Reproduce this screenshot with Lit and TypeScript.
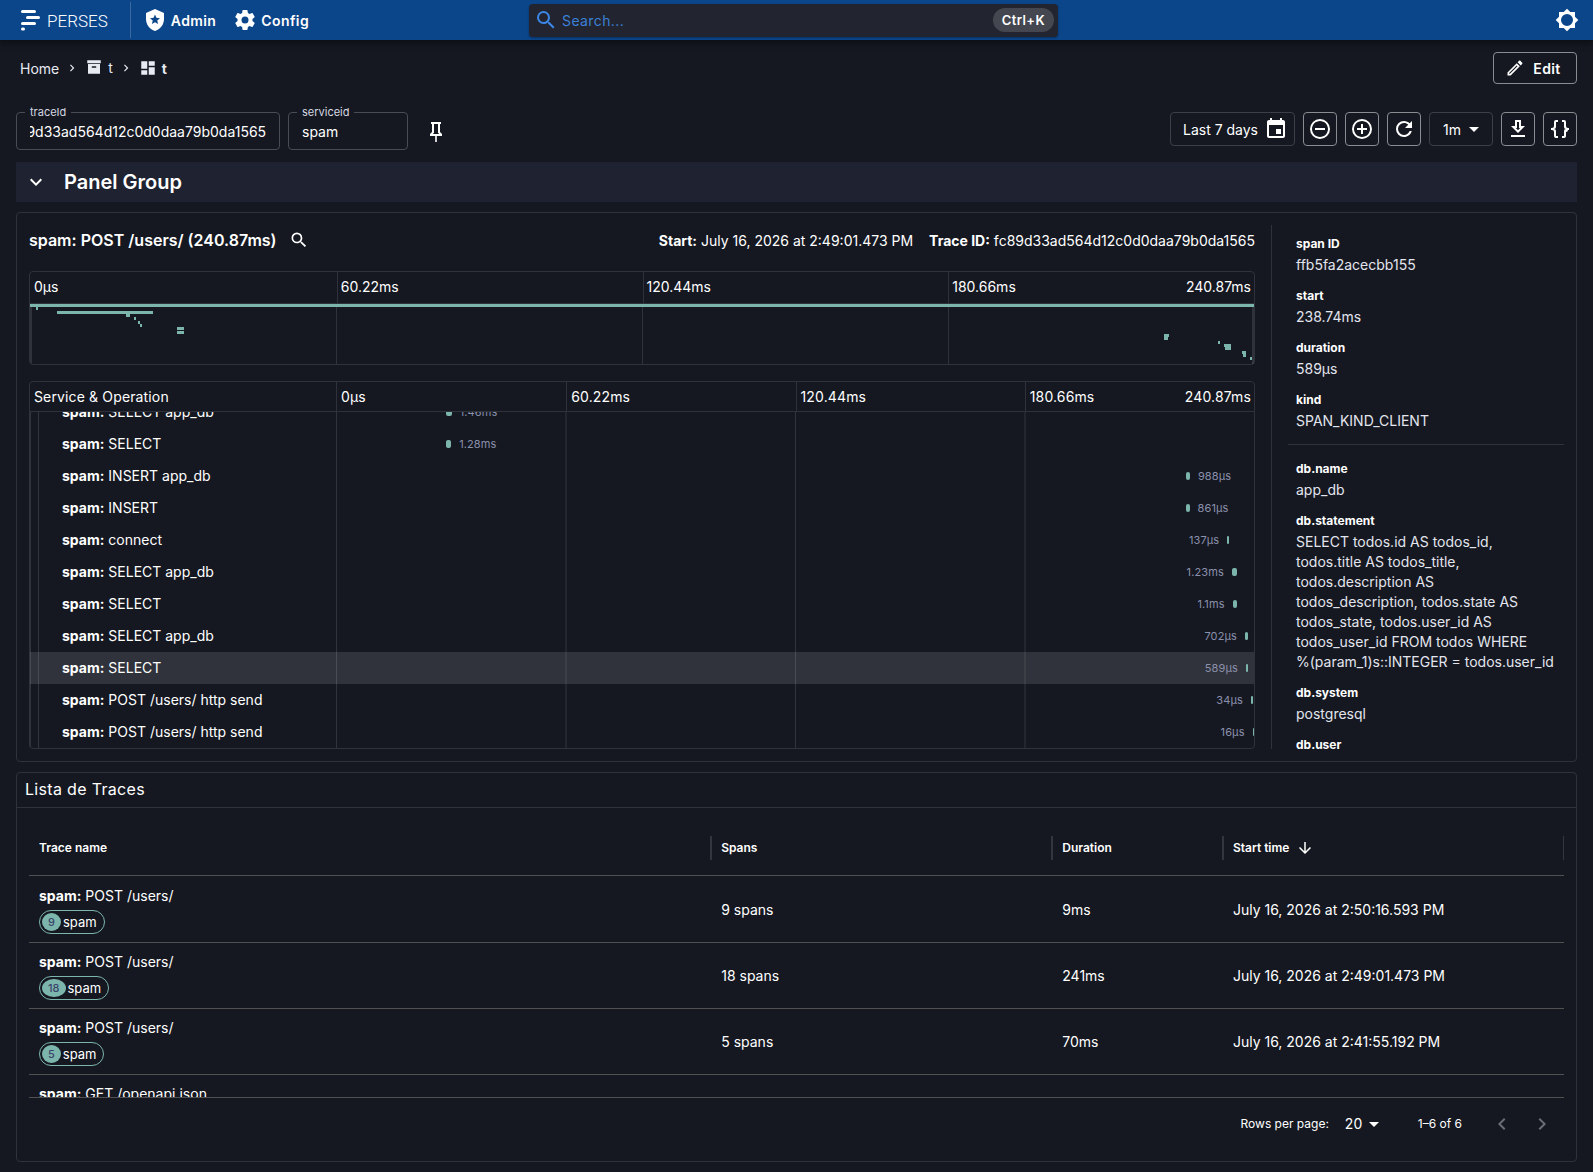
import { LitElement, html, css, svg } from "lit";
import { customElement, query } from "lit/decorators.js";
import { classMap } from "lit/directives/class-map.js";

const ICONS = {
  shieldStar:
    "M12,1L3,5V11C3,16.55 6.84,21.74 12,23C17.16,21.74 21,16.55 21,11V5L12,1M15.08,16L12,14.15L8.93,16L9.74,12.5L7.03,10.16L10.6,9.85L12,6.55L13.4,9.84L16.97,10.15L14.26,12.5L15.08,16Z",
  cog: "M12,15.5A3.5,3.5 0 0,1 8.5,12A3.5,3.5 0 0,1 12,8.5A3.5,3.5 0 0,1 15.5,12A3.5,3.5 0 0,1 12,15.5M19.43,12.97C19.47,12.65 19.5,12.33 19.5,12C19.5,11.67 19.47,11.34 19.43,11L21.54,9.37C21.73,9.22 21.78,8.95 21.66,8.73L19.66,5.27C19.54,5.05 19.27,4.96 19.05,5.05L16.56,6.05C16.04,5.66 15.5,5.32 14.87,5.07L14.5,2.42C14.46,2.18 14.25,2 14,2H10C9.75,2 9.54,2.18 9.5,2.42L9.13,5.07C8.5,5.32 7.96,5.66 7.44,6.05L4.95,5.05C4.73,4.96 4.46,5.05 4.34,5.27L2.34,8.73C2.21,8.95 2.27,9.22 2.46,9.37L4.57,11C4.53,11.34 4.5,11.67 4.5,12C4.5,12.33 4.53,12.65 4.57,12.97L2.46,14.63C2.27,14.78 2.21,15.05 2.34,15.27L4.34,18.73C4.46,18.95 4.73,19.03 4.95,18.95L7.44,17.94C7.96,18.34 8.5,18.68 9.13,18.93L9.5,21.58C9.54,21.82 9.75,22 10,22H14C14.25,22 14.46,21.82 14.5,21.58L14.87,18.93C15.5,18.67 16.04,18.34 16.56,17.94L19.05,18.95C19.27,19.03 19.54,18.95 19.66,18.73L21.66,15.27C21.78,15.05 21.73,14.78 21.54,14.63L19.43,12.97Z",
  magnify:
    "M9.5,3A6.5,6.5 0 0,1 16,9.5C16,11.11 15.41,12.59 14.44,13.73L14.71,14H15.5L20.5,19L19,20.5L14,15.5V14.71L13.73,14.44C12.59,15.41 11.11,16 9.5,16A6.5,6.5 0 0,1 3,9.5A6.5,6.5 0 0,1 9.5,3M9.5,5C7,5 5,7 5,9.5C5,12 7,14 9.5,14C12,14 14,12 14,9.5C14,7 12,5 9.5,5Z",
  brightness:
    "M12,18A6,6 0 0,1 6,12A6,6 0 0,1 12,6A6,6 0 0,1 18,12A6,6 0 0,1 12,18M20,15.31L23.31,12L20,8.69V4H15.31L12,0.69L8.69,4H4V8.69L0.69,12L4,15.31V20H8.69L12,23.31L15.31,20H20V15.31Z",
  chevronRight: "M8.59,16.58L13.17,12L8.59,7.41L10,6L16,12L10,18L8.59,16.58Z",
  chevronLeft: "M15.41,16.58L10.83,12L15.41,7.41L14,6L8,12L14,18L15.41,16.58Z",
  chevronDown: "M7.41,8.58L12,13.17L16.59,8.58L18,10L12,16L6,10L7.41,8.58Z",
  archive:
    "M3,3H21V7H3V3M4,8H20V21H4V8M9.5,11A0.5,0.5 0 0,0 9,11.5V13H15V11.5A0.5,0.5 0 0,0 14.5,11H9.5Z",
  dashboard: "M13,3V9H21V3M13,21H21V11H13M3,21H11V15H3M3,13H11V3H3V13Z",
  pencil:
    "M14.06,9L15,9.94L5.92,19H5V18.08L14.06,9M17.66,3C17.41,3 17.15,3.1 16.96,3.29L15.13,5.12L18.88,8.87L20.71,7.04C21.1,6.65 21.1,6 20.71,5.63L18.37,3.29C18.17,3.09 17.92,3 17.66,3M14.06,6.19L3,17.25V21H6.75L17.81,9.94L14.06,6.19Z",
  pin: "M16,12V4H17V2H7V4H8V12L6,14V16H11.2V22H12.8V16H18V14L16,12M8.8,14L10,12.8V4H14V12.8L15.2,14H8.8Z",
  calendar:
    "M17 12h-5v5h5v-5zM16 1v2H8V1H6v2H5c-1.11 0-1.99.9-1.99 2L3 19c0 1.1.89 2 2 2h14c1.1 0 2-.9 2-2V5c0-1.1-.9-2-2-2h-1V1h-2zm3 18H5V8h14v11z",
  zoomOut:
    "M12,20C7.59,20 4,16.41 4,12C4,7.59 7.59,4 12,4C16.41,4 20,7.59 20,12C20,16.41 16.41,20 12,20M12,2A10,10 0 0,0 2,12A10,10 0 0,0 12,22A10,10 0 0,0 22,12A10,10 0 0,0 12,2M7,13H17V11H7",
  zoomIn:
    "M12,20C7.59,20 4,16.41 4,12C4,7.59 7.59,4 12,4C16.41,4 20,7.59 20,12C20,16.41 16.41,20 12,20M12,2A10,10 0 0,0 2,12A10,10 0 0,0 12,22A10,10 0 0,0 22,12A10,10 0 0,0 12,2M13,7H11V11H7V13H11V17H13V13H17V11H13V7Z",
  refresh:
    "M17.65,6.35C16.2,4.9 14.21,4 12,4A8,8 0 0,0 4,12A8,8 0 0,0 12,20C15.73,20 18.84,17.45 19.73,14H17.65C16.83,16.33 14.61,18 12,18A6,6 0 0,1 6,12A6,6 0 0,1 12,6C13.66,6 15.14,6.69 16.22,7.78L13,11H20V4L17.65,6.35Z",
  download:
    "M13,5V11H14.17L12,13.17L9.83,11H11V5H13M15,3H9V9H5L12,16L19,9H15V3M19,18H5V20H19V18Z",
  braces:
    "M8,3A2,2 0 0,0 6,5V9A2,2 0 0,1 4,11H3V13H4A2,2 0 0,1 6,15V19A2,2 0 0,0 8,21H10V19H8V14A2,2 0 0,0 6,12A2,2 0 0,0 8,10V5H10V3M16,3A2,2 0 0,1 18,5V9A2,2 0 0,0 20,11H21V13H20A2,2 0 0,1 18,15V19A2,2 0 0,1 16,21H14V19H16V14A2,2 0 0,1 18,12A2,2 0 0,1 16,10V5H14V3H16Z",
  caret: "M7 10l5 5 5-5z",
  arrowDown: "M20 12l-1.41-1.41L13 16.17V4h-2v12.17l-5.58-5.59L4 12l8 8 8-8z",
};

const icon = (name: keyof typeof ICONS, size = "i24") =>
  html`<svg class=${size} viewBox="0 0 24 24" fill="currentColor" aria-hidden="true"><path d=${ICONS[name]} /></svg>`;

/** Total duration of the trace, in milliseconds. */
const TOTAL = 240.87;
const pct = (ms: number) => `${((ms / TOTAL) * 100).toFixed(3)}%`;

interface Span {
  name: string;
  start: number;
  ms: number;
  label: string;
  selected?: boolean;
}

const SPANS: Span[] = [
  { name: "SELECT app_db", start: 28.9, ms: 1.46, label: "1.46ms" },
  { name: "SELECT", start: 28.95, ms: 1.28, label: "1.28ms" },
  { name: "INSERT app_db", start: 223.08, ms: 0.988, label: "988μs" },
  { name: "INSERT", start: 223.1, ms: 0.861, label: "861μs" },
  { name: "connect", start: 233.85, ms: 0.137, label: "137μs" },
  { name: "SELECT app_db", start: 235.05, ms: 1.23, label: "1.23ms" },
  { name: "SELECT", start: 235.25, ms: 1.1, label: "1.1ms" },
  { name: "SELECT app_db", start: 238.5, ms: 0.702, label: "702μs" },
  { name: "SELECT", start: 238.74, ms: 0.589, label: "589μs", selected: true },
  { name: "POST /users/ http send", start: 240.05, ms: 0.034, label: "34μs" },
  { name: "POST /users/ http send", start: 240.5, ms: 0.016, label: "16μs" },
];

/** Spans above the visible part of the list; only the minimap draws them. */
const EARLIER: [number, number][] = [
  [0, TOTAL],
  [1.1, 0.2],
  [5.3, 19],
  [18.8, 0.95],
  [20.5, 0.3],
  [21.2, 0.2],
  [21.6, 0.2],
];
const MINIMAP: [number, number][] = [
  ...EARLIER,
  ...SPANS.map((s): [number, number] => [s.start, s.ms]),
];

const TICKS = ["0μs", "60.22ms", "120.44ms", "180.66ms"];

const ATTRS = [
  ["span ID", "ffb5fa2acecbb155"],
  ["start", "238.74ms"],
  ["duration", "589μs"],
  ["kind", "SPAN_KIND_CLIENT"],
];
const DB_ATTRS = [
  ["db.name", "app_db"],
  [
    "db.statement",
    "SELECT todos.id AS todos_id, todos.title AS todos_title, todos.description AS todos_description, todos.state AS todos_state, todos.user_id AS todos_user_id FROM todos WHERE\n%(param_1)s::INTEGER = todos.user_id",
  ],
  ["db.system", "postgresql"],
  ["db.user", "postgres"],
];

const TRACES = [
  { name: "POST /users/", spans: 9, duration: "9ms", start: "July 16, 2026 at 2:50:16.593 PM" },
  { name: "POST /users/", spans: 18, duration: "241ms", start: "July 16, 2026 at 2:49:01.473 PM" },
  { name: "POST /users/", spans: 5, duration: "70ms", start: "July 16, 2026 at 2:41:55.192 PM" },
  { name: "GET /openapi.json", spans: 3, duration: "12ms", start: "July 16, 2026 at 2:41:50.310 PM" },
];

const shared = css`
  :host {
    display: block;
  }
  * {
    box-sizing: border-box;
  }
  svg {
    display: block;
    flex: none;
  }
  .i14 { width: 14px; height: 14px; }
  .i18 { width: 18px; height: 18px; }
  .i20 { width: 20px; height: 20px; }
  .i24 { width: 24px; height: 24px; }
  button, input, select {
    font: inherit;
    letter-spacing: inherit;
    color: inherit;
    margin: 0;
    padding: 0;
    border: 0;
    background: none;
    outline: none;
  }
  button {
    display: inline-flex;
    align-items: center;
    justify-content: center;
  }
  a {
    color: inherit;
    text-decoration: none;
  }
  h1, h2, h3, p, dl, dd {
    margin: 0;
  }
`;

@customElement("app-header")
export class AppHeader extends LitElement {
  static styles = [
    shared,
    css`
      .bar {
        display: grid;
        grid-template-columns: 1fr minmax(0, 529px) 1fr;
        align-items: center;
        height: 40px;
        padding: 0 14px 0 8px;
        background: #0b458a;
        color: #fff;
        box-shadow: 0 2px 4px rgba(0, 0, 0, 0.25), 0 4px 8px rgba(0, 0, 0, 0.2);
      }
      .left {
        display: flex;
        align-items: center;
      }
      .brand {
        display: flex;
        align-items: center;
        gap: 6px;
        height: 36px;
        padding: 0 22px 0 12px;
        border-right: 1px solid rgba(255, 255, 255, 0.2);
        font: 300 17px/22px Roboto, "Liberation Sans", sans-serif;
      }
      .brand span {
        padding-top: 2px;
      }
      .nav {
        display: flex;
        gap: 17px;
        padding-left: 12px;
      }
      .nav a {
        display: flex;
        align-items: center;
        gap: 4px;
        font-weight: 600;
        letter-spacing: 0.4px;
      }
      .search {
        display: flex;
        align-items: center;
        height: 33px;
        padding: 0 4px 0 5px;
        gap: 4px;
        border-radius: 4px;
        background: #22252f;
        color: #3b86e6;
        letter-spacing: 0.4px;
        box-shadow: 0 1px 2px rgba(0, 0, 0, 0.3);
      }
      .search input {
        flex: 1;
        min-width: 0;
        padding-top: 1px;
      }
      .search input::placeholder {
        color: #3b80d8;
        opacity: 1;
      }
      .key {
        height: 24px;
        padding: 0 9px;
        border-radius: 12px;
        background: #44474f;
        color: #fff;
        font-size: 13px;
        line-height: 24px;
        font-weight: 600;
      }
      .theme {
        justify-self: end;
      }
    `,
  ];

  render() {
    return html`
      <header class="bar">
        <div class="left">
          <a class="brand" href="#">
            <svg width="21" height="22" viewBox="0 0 21 22" fill="none" stroke="#fff" stroke-width="3" stroke-linecap="round" aria-hidden="true">
              <path d="M2.5 2.5H14.5M7.5 8.5H18.5M2.5 14.5H14.5M2.5 20H3.5" />
            </svg>
            <span>PERSES</span>
          </a>
          <nav class="nav">
            <a href="#admin">${icon("shieldStar")}Admin</a>
            <a href="#config">${icon("cog")}Config</a>
          </nav>
        </div>
        <div class="search">
          ${icon("magnify")}
          <input type="text" placeholder="Search..." aria-label="Search" />
          <span class="key">Ctrl+K</span>
        </div>
        <button class="theme" aria-label="Toggle theme">${icon("brightness")}</button>
      </header>
    `;
  }
}

@customElement("dashboard-toolbar")
export class DashboardToolbar extends LitElement {
  static styles = [
    shared,
    css`
      .row {
        display: flex;
        align-items: center;
        justify-content: space-between;
      }
      .top {
        height: 56px;
        padding-left: 4px;
      }
      .crumbs {
        display: flex;
        align-items: center;
        gap: 6px;
        color: #e8eaf2;
      }
      .crumbs a, .crumbs strong {
        display: flex;
        align-items: center;
        gap: 5px;
      }
      .crumbs .project {
        padding-bottom: 2px;
      }
      .edit {
        gap: 8px;
        width: 84px;
        height: 32px;
        padding-right: 4px;
        border: 1px solid #8a8c92;
        border-radius: 4px;
        font-weight: 600;
        letter-spacing: 0.4px;
      }
      .vars {
        height: 66px;
        align-items: flex-start;
        padding-top: 16px;
      }
      .group {
        display: flex;
        gap: 8px;
      }
      .field {
        position: relative;
        width: 120px;
        height: 38px;
        padding: 0 13px;
        border: 1px solid #484b53;
        border-radius: 4px;
      }
      .wide {
        width: 264px;
      }
      .field label {
        position: absolute;
        top: -10px;
        left: 8px;
        padding: 0 5px;
        background: #151821;
        font-size: 11px;
        line-height: 18px;
        color: #d5d8e2;
      }
      .field input {
        width: 100%;
        height: 36px;
      }
      .pin {
        padding: 8px;
      }
      .box {
        height: 34px;
        min-width: 34px;
        border: 1px solid #8a8c92;
        border-radius: 4px;
      }
      .range {
        gap: 6px;
        padding: 0 6px 0 12px;
        border-color: #3c3f48;
      }
      .interval {
        position: relative;
        display: flex;
        align-items: center;
        width: 64px;
        border-color: #3c3f48;
      }
      .interval select {
        width: 100%;
        height: 32px;
        padding-left: 13px;
        appearance: none;
      }
      .interval svg {
        position: absolute;
        right: 6px;
        pointer-events: none;
      }
    `,
  ];

  @query("#trace-id") traceInput!: HTMLInputElement;

  firstUpdated() {
    // A long trace id shows its end, as after typing it in.
    this.traceInput.scrollLeft = this.traceInput.scrollWidth;
  }

  render() {
    return html`
      <div class="row top">
        <nav class="crumbs" aria-label="Breadcrumb">
          <a href="#home">Home</a>
          ${icon("chevronRight", "i14")}
          <a class="project" href="#project">${icon("archive", "i18")}t</a>
          ${icon("chevronRight", "i14")}
          <strong>${icon("dashboard", "i18")}t</strong>
        </nav>
        <button class="edit">${icon("pencil", "i20")}Edit</button>
      </div>
      <div class="row vars">
        <div class="group">
          <div class="field wide">
            <label for="trace-id">traceId</label>
            <input id="trace-id" type="text" .value=${"fc89d33ad564d12c0d0daa79b0da1565"} />
          </div>
          <div class="field">
            <label for="service-id">serviceid</label>
            <input id="service-id" type="text" .value=${"spam"} />
          </div>
          <button class="pin" aria-label="Pin variables">${icon("pin")}</button>
        </div>
        <div class="group">
          <button class="box range">Last 7 days ${icon("calendar")}</button>
          <button class="box" aria-label="Zoom out">${icon("zoomOut")}</button>
          <button class="box" aria-label="Zoom in">${icon("zoomIn")}</button>
          <button class="box" aria-label="Refresh">${icon("refresh")}</button>
          <div class="box interval">
            <select aria-label="Refresh interval"><option>1m</option></select>
            ${icon("caret")}
          </div>
          <button class="box" aria-label="Download">${icon("download")}</button>
          <button class="box" aria-label="View JSON">${icon("braces")}</button>
        </div>
      </div>
    `;
  }
}

@customElement("trace-panel")
export class TracePanel extends LitElement {
  static styles = [
    shared,
    css`
      .panel {
        display: grid;
        grid-template-columns: minmax(0, 1fr) 293px;
        gap: 16px;
        padding: 12px;
        border: 1px solid #2f323b;
        border-radius: 4px;
      }
      .head {
        display: flex;
        align-items: center;
        height: 30px;
        margin-bottom: 16px;
      }
      .head h3 {
        font-size: 16px;
        font-weight: 600;
      }
      .head button {
        margin-left: 12px;
      }
      .meta {
        display: flex;
        gap: 16px;
        margin-left: auto;
      }
      .chart {
        border: 1px solid #2f323b;
        border-radius: 4px;
        overflow: hidden;
      }
      .chart + .chart {
        margin-top: 16px;
      }
      .ticks {
        display: grid;
        grid-template-columns: repeat(4, 1fr);
        border-bottom: 1px solid #2f323b;
      }
      .tick {
        display: flex;
        justify-content: space-between;
        align-items: center;
        padding: 0 3px 0 4px;
      }
      .tick + .tick {
        border-left: 1px solid #2f323b;
      }
      .map-ticks {
        height: 32px;
        padding-left: 1px;
        line-height: 20px;
      }
      .map-ticks .tick {
        padding: 0 3px 1px;
      }
      .map {
        display: block;
        width: 100%;
        height: 60px;
      }
      .minimap {
        position: relative;
      }
      .grip {
        position: absolute;
        top: 3px;
        bottom: 0;
        width: 2px;
        background: #2f323b;
      }
      .grip-left { left: 0; }
      .grip-right { right: 0; }
      .gantt {
        display: grid;
        grid-template-columns: 306px minmax(0, 1fr);
        line-height: 20px;
      }
      .gantt-head {
        height: 30px;
        border-bottom: 1px solid #2f323b;
        letter-spacing: 0.01em;
      }
      .gantt-head .ticks {
        border: 0;
        border-left: 1px solid #2f323b;
      }
      .service {
        padding: 0 4px;
        line-height: 29px;
      }
      .rows {
        display: flex;
        flex-direction: column;
        justify-content: flex-end;
        height: 336px;
        overflow: hidden;
      }
      .span {
        flex: none;
        height: 32px;
      }
      .selected {
        background: #30333b;
      }
      .name {
        display: flex;
        align-items: center;
        white-space: nowrap;
      }
      .guide {
        width: 8px;
        height: 32px;
        border-left: 1px solid rgba(255, 255, 255, 0.12);
      }
      .guide:nth-child(2) {
        width: 24px;
      }
      .lane {
        display: flex;
        align-items: center;
        background: linear-gradient(90deg, rgba(255, 255, 255, 0.12) 1px, transparent 0) 0 0 / 25% 100%;
        font-size: 11px;
        letter-spacing: 0.01em;
        color: #8b90ac;
      }
      .before {
        flex: none;
        padding-right: 8px;
        text-align: right;
      }
      .span-bar {
        flex: none;
        min-width: 2px;
        height: 8px;
        margin-right: 8px;
        border-radius: 2px;
        background: #7cb5ac;
      }
      .side {
        height: 0;
        min-height: 100%;
        padding: 3px 0 0 16px;
        border-left: 1px solid #2f323b;
        overflow: hidden;
      }
      .side dl {
        padding: 0 8px 8px;
      }
      .side dl + dl {
        padding-top: 8px;
        border-top: 1px solid #2f323b;
      }
      .item {
        padding: 5px 0;
      }
      .item dt {
        font-size: 12px;
        line-height: 22px;
        font-weight: 700;
      }
      .item dd {
        line-height: 20px;
        white-space: pre-line;
        color: #e3e5ee;
      }
    `,
  ];

  private span(s: Span) {
    const left = s.start > TOTAL * 0.95;
    return html`
      <div class=${classMap({ gantt: true, span: true, selected: !!s.selected })}>
        <div class="name"><i class="guide"></i><i class="guide"></i><span><b>spam:</b> ${s.name}</span></div>
        <div class="lane">
          <span class="before" style="width:${pct(s.start)}">${left ? s.label : ""}</span>
          <span class="span-bar" style="width:${pct(s.ms)}"></span>
          ${left ? "" : s.label}
        </div>
      </div>
    `;
  }

  private ticks() {
    return TICKS.map(
      (t, i) => html`<span class="tick"><span>${t}</span>${i === 3 ? html`<span>240.87ms</span>` : ""}</span>`,
    );
  }

  private attrs(list: string[][]) {
    return html`<dl>${list.map(([k, v]) => html`<div class="item"><dt>${k}</dt><dd>${v}</dd></div>`)}</dl>`;
  }

  render() {
    return html`
      <section class="panel">
        <div>
          <div class="head">
            <h3>spam: POST /users/ (240.87ms)</h3>
            <button aria-label="Search spans">${icon("magnify", "i20")}</button>
            <div class="meta">
              <span><b>Start:</b> July 16, 2026 at 2:49:01.473 PM</span>
              <span><b>Trace ID:</b> fc89d33ad564d12c0d0daa79b0da1565</span>
            </div>
          </div>
          <div class="chart">
            <div class="ticks map-ticks">${this.ticks()}</div>
            <div class="minimap">
              <svg class="map" shape-rendering="crispEdges">
                ${[25, 50, 75].map((x) => svg`<rect x="${x}%" width="1" height="60" fill="#2f323b" />`)}
                ${MINIMAP.map(
                  ([start, ms], i) => svg`<rect x=${pct(start)} y=${Math.round((i * 10) / 3)}
                    width=${pct(Math.max(ms, 0.4))} height="3" fill="#7cb5ac" />`,
                )}
              </svg>
              <div class="grip grip-left"></div>
              <div class="grip grip-right"></div>
            </div>
          </div>
          <div class="chart">
            <div class="gantt gantt-head">
              <span class="service">Service &amp; Operation</span>
              <div class="ticks">${this.ticks()}</div>
            </div>
            <div class="rows">${SPANS.map((s) => this.span(s))}</div>
          </div>
        </div>
        <aside class="side">${this.attrs(ATTRS)}${this.attrs(DB_ATTRS)}</aside>
      </section>
    `;
  }
}

@customElement("trace-table")
export class TraceTable extends LitElement {
  static styles = [
    shared,
    css`
      .panel {
        border: 1px solid #2f323b;
        border-radius: 4px;
      }
      .title {
        height: 35px;
        padding-left: 8px;
        border-bottom: 1px solid #2f323b;
        font-size: 16px;
        line-height: 33px;
        font-weight: 400;
        letter-spacing: 0.02em;
      }
      .scroll {
        height: 278px;
        margin: 12px 12px 0;
        border-bottom: 1px solid #515151;
        overflow: hidden;
      }
      table {
        width: 100%;
        table-layout: fixed;
        border-collapse: separate;
        border-spacing: 0;
      }
      th, td {
        padding: 0 10px;
        text-align: left;
        border-bottom: 1px solid #515151;
      }
      th {
        height: 56px;
        font-size: 12px;
        font-weight: 600;
      }
      th.c4 { width: 44.444%; }
      th.c2 { width: 22.222%; }
      .th {
        display: flex;
        align-items: center;
        gap: 7px;
        height: 24px;
        margin-right: -11px;
        border-right: 2px solid #33363f;
      }
      td {
        height: 66px;
      }
      tbody tr:first-child td {
        height: 67px;
        padding-top: 1px;
      }
      .op {
        line-height: 20px;
        margin-bottom: 4px;
      }
      .chip {
        display: inline-flex;
        align-items: center;
        height: 24px;
        padding: 0 7px 0 2px;
        gap: 2px;
        border: 1px solid #7cb5ac;
        border-radius: 12px;
        font-size: 13px;
        line-height: 22px;
        vertical-align: top;
      }
      .count {
        min-width: 18px;
        height: 18px;
        padding: 0 6px;
        border-radius: 50%;
        background: #7cb5ac;
        color: #3b4569;
        font-size: 11px;
        line-height: 18px;
        font-weight: 500;
      }
      .footer {
        display: flex;
        align-items: center;
        justify-content: flex-end;
        height: 52px;
        margin: 0 12px 11px;
        font-size: 12px;
        line-height: 20px;
      }
      .size {
        display: flex;
        align-items: center;
        margin: 0 32px 0 16px;
        font-size: 14px;
      }
      .size select {
        appearance: none;
        width: 25px;
        margin-right: -8px;
      }
      .page {
        width: 40px;
        height: 40px;
        color: #6a6d75;
      }
      .pages {
        display: flex;
        margin-left: 20px;
        padding-right: 2px;
      }
    `,
  ];

  render() {
    return html`
      <section class="panel">
        <h3 class="title">Lista de Traces</h3>
        <div class="scroll">
          <table>
            <thead>
              <tr>
                <th class="c4"><div class="th">Trace name</div></th>
                <th class="c2"><div class="th">Spans</div></th>
                <th><div class="th">Duration</div></th>
                <th class="c2"><div class="th">Start time ${icon("arrowDown", "i18")}</div></th>
              </tr>
            </thead>
            <tbody>
              ${TRACES.map(
                (t) => html`<tr>
                  <td>
                    <div class="op"><b>spam:</b> ${t.name}</div>
                    <span class="chip"><span class="count">${t.spans}</span>spam</span>
                  </td>
                  <td>${t.spans} spans</td>
                  <td>${t.duration}</td>
                  <td>${t.start}</td>
                </tr>`,
              )}
            </tbody>
          </table>
        </div>
        <div class="footer">
          <label for="page-size">Rows per page:</label>
          <span class="size">
            <select id="page-size"><option>20</option></select>
            ${icon("caret")}
          </span>
          <span>1–6 of 6</span>
          <span class="pages">
            <button class="page" disabled aria-label="Previous page">${icon("chevronLeft")}</button>
            <button class="page" disabled aria-label="Next page">${icon("chevronRight")}</button>
          </span>
        </div>
      </section>
    `;
  }
}

@customElement("app-root")
export class AppRoot extends LitElement {
  static styles = [
    shared,
    css`
      :host {
        min-height: 100vh;
        background: #151821;
        color: #fff;
        font: 400 14px/21px Inter, "Liberation Sans", sans-serif;
      }
      main {
        padding: 0 16px 10px;
      }
      .group {
        display: flex;
        align-items: center;
        gap: 16px;
        height: 40px;
        padding-left: 8px;
        background: #1f2230;
      }
      .group h2 {
        font-size: 20px;
        font-weight: 600;
      }
      .panels {
        display: grid;
        gap: 10px;
        padding-top: 10px;
      }
    `,
  ];

  render() {
    return html`
      <app-header></app-header>
      <main>
        <dashboard-toolbar></dashboard-toolbar>
        <div class="group">
          <button aria-label="Collapse group">${icon("chevronDown")}</button>
          <h2>Panel Group</h2>
        </div>
        <div class="panels">
          <trace-panel></trace-panel>
          <trace-table></trace-table>
        </div>
      </main>
    `;
  }
}
